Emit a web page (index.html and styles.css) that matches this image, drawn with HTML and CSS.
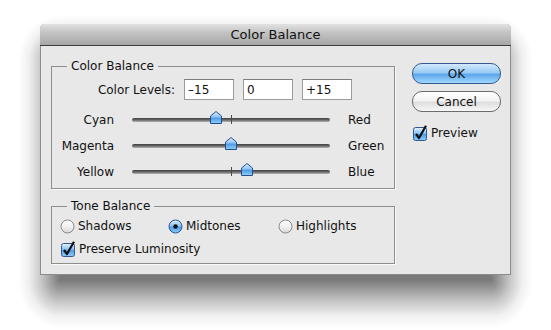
FILE: index.html
```html
<!DOCTYPE html>
<html lang="en">
<head>
    <meta charset="UTF-8">
    <title>Color Balance</title>
    <link rel="stylesheet" href="styles.css">
</head>
<body>
  <div class="desk">
    <div class="window">
        <div class="titlebar">Color Balance</div>
        <div class="content">
            <div class="left">
                <fieldset class="group balance">
                    <legend>Color Balance</legend>
                    <div class="levels">
                        <span class="levels-label">Color Levels:</span>
                        <input class="field" type="text" value="–15">
                        <input class="field" type="text" value="0">
                        <input class="field" type="text" value="+15">
                    </div>

                    <div class="slider-row">
                        <span class="from">Cyan</span>
                        <div class="track">
                            <span class="tick"></span>
                            <svg class="thumb" style="left: 78px" width="12" height="13" viewBox="0 0 12 13"><use href="#thumb-shape"/></svg>
                        </div>
                        <span class="to">Red</span>
                    </div>
                    <div class="slider-row">
                        <span class="from">Magenta</span>
                        <div class="track">
                            <span class="tick"></span>
                            <svg class="thumb" style="left: 93px" width="12" height="13" viewBox="0 0 12 13"><use href="#thumb-shape"/></svg>
                        </div>
                        <span class="to">Green</span>
                    </div>
                    <div class="slider-row">
                        <span class="from">Yellow</span>
                        <div class="track">
                            <span class="tick"></span>
                            <svg class="thumb" style="left: 109px" width="12" height="13" viewBox="0 0 12 13"><use href="#thumb-shape"/></svg>
                        </div>
                        <span class="to">Blue</span>
                    </div>
                </fieldset>

                <fieldset class="group tone">
                    <legend>Tone Balance</legend>
                    <div class="radios">
                        <label class="option"><svg width="15" height="15" viewBox="0 0 15 15"><use href="#radio-off"/></svg>Shadows</label>
                        <label class="option"><svg width="15" height="15" viewBox="0 0 15 15"><use href="#radio-on"/></svg>Midtones</label>
                        <label class="option"><svg width="15" height="15" viewBox="0 0 15 15"><use href="#radio-off"/></svg>Highlights</label>
                    </div>
                    <label class="option check-row"><svg width="16" height="16" viewBox="0 0 16 16"><use href="#check-on"/></svg>Preserve Luminosity</label>
                </fieldset>
            </div>

            <div class="right">
                <button class="btn btn-default">OK</button>
                <button class="btn">Cancel</button>
                <label class="option preview"><svg width="16" height="16" viewBox="0 0 16 16"><use href="#check-on"/></svg>Preview</label>
            </div>
        </div>
    </div>
  </div>

    <!-- shared control graphics -->
    <svg class="defs" width="0" height="0">
        <defs>
            <linearGradient id="blue" x1="0" y1="0" x2="0" y2="1">
                <stop offset="0" stop-color="#e4f2ff"/>
                <stop offset="0.45" stop-color="#8ec3f3"/>
                <stop offset="0.55" stop-color="#4f9be6"/>
                <stop offset="1" stop-color="#8fd0fb"/>
            </linearGradient>
            <linearGradient id="white" x1="0" y1="0" x2="0" y2="1">
                <stop offset="0" stop-color="#ffffff"/>
                <stop offset="0.5" stop-color="#f1f1f1"/>
                <stop offset="1" stop-color="#d6d6d6"/>
            </linearGradient>
            <g id="thumb-shape">
                <path d="M6 0.5 L11.5 5 L11.5 12.5 L0.5 12.5 L0.5 5 Z" fill="url(#blue)" stroke="#28508e" stroke-linejoin="round"/>
            </g>
            <g id="radio-off">
                <circle cx="7.5" cy="7.5" r="6.5" fill="url(#white)" stroke="#8a8a8a"/>
            </g>
            <g id="radio-on">
                <circle cx="7.5" cy="7.5" r="6.5" fill="url(#blue)" stroke="#2d5590"/>
                <circle cx="7.5" cy="7.5" r="2.2" fill="#111"/>
            </g>
            <g id="check-on">
                <rect x="1.5" y="2.5" width="13" height="13" rx="2" fill="url(#blue)" stroke="#34598f"/>
                <path d="M4 9 L7 13 L14 0.8" fill="none" stroke="#111" stroke-width="2.2" stroke-linejoin="round"/>
            </g>
        </defs>
    </svg>
</body>
</html>
```

FILE: styles.css
```css
body {
    margin: 0;
    background: #fff;
    font-family: "DejaVu Sans", Verdana, sans-serif;
    font-size: 12px;
    color: #111;
}

/* the window's soft drop shadow, built as a blurred rectangle in 9 pieces */
.desk {
    min-height: 330px;
    box-sizing: border-box;
    padding: 24px 0 0 40px;
    background-color: #fff;
    background-repeat: no-repeat;
    background-image:
        linear-gradient(rgba(0, 0, 0, 0.52), rgba(0, 0, 0, 0.52)),
        linear-gradient(to bottom, rgba(0, 0, 0, 0.52), rgba(0, 0, 0, 0.22) 45%, rgba(0, 0, 0, 0.06) 75%, rgba(0, 0, 0, 0)),
        linear-gradient(to top, rgba(0, 0, 0, 0.52), rgba(0, 0, 0, 0.22) 45%, rgba(0, 0, 0, 0.06) 75%, rgba(0, 0, 0, 0)),
        linear-gradient(to left, rgba(0, 0, 0, 0.52), rgba(0, 0, 0, 0.22) 45%, rgba(0, 0, 0, 0.06) 75%, rgba(0, 0, 0, 0)),
        linear-gradient(to right, rgba(0, 0, 0, 0.52), rgba(0, 0, 0, 0.22) 45%, rgba(0, 0, 0, 0.06) 75%, rgba(0, 0, 0, 0)),
        radial-gradient(farthest-side at right top, rgba(0, 0, 0, 0.52), rgba(0, 0, 0, 0.22) 45%, rgba(0, 0, 0, 0.06) 75%, rgba(0, 0, 0, 0)),
        radial-gradient(farthest-side at left top, rgba(0, 0, 0, 0.52), rgba(0, 0, 0, 0.22) 45%, rgba(0, 0, 0, 0.06) 75%, rgba(0, 0, 0, 0)),
        radial-gradient(farthest-side at right bottom, rgba(0, 0, 0, 0.52), rgba(0, 0, 0, 0.22) 45%, rgba(0, 0, 0, 0.06) 75%, rgba(0, 0, 0, 0)),
        radial-gradient(farthest-side at left bottom, rgba(0, 0, 0, 0.52), rgba(0, 0, 0, 0.22) 45%, rgba(0, 0, 0, 0.06) 75%, rgba(0, 0, 0, 0));
    background-size:
        431px 220px,
        431px 48px,
        431px 45px,
        42px 220px,
        42px 220px,
        42px 48px,
        42px 48px,
        42px 45px,
        42px 45px;
    background-position:
        60px 60px,
        60px 280px,
        60px 15px,
        18px 60px,
        491px 60px,
        18px 280px,
        491px 280px,
        18px 15px,
        491px 15px;
}

.window {
    width: 471px;
    box-sizing: border-box;
    background: #e8e8e8;
    border: 1px solid #8c8c8c;
    border-top: none;
    border-radius: 5px 5px 0 0;
}

.titlebar {
    height: 21px;
    line-height: 22px;
    margin: 0 -1px;
    text-align: center;
    font-size: 13px;
    background: linear-gradient(#e2e2e2, #c4c4c4 40%, #a7a7a7);
    border-bottom: 1px solid #3c3c3c;
    border-radius: 5px 5px 0 0;
}

.content {
    display: flex;
    align-items: flex-start;
}

.left {
    width: 344px;
    padding: 12px 0 10px 10px;
}

.right {
    display: flex;
    flex-direction: column;
    align-items: flex-start;
    width: 89px;
    padding: 17px 0 0 17px;
}

/* group boxes */

.group {
    margin: 0;
    padding: 0 0 3px;
    min-width: 0;
    width: 344px;
    box-sizing: border-box;
    border: 1px solid #8e8e8e;
    box-shadow: 1px 1px 0 #fbfbfb;
}

.group legend {
    margin-left: 15px;
    padding: 0 4px;
    line-height: 16px;
    font-size: 12px;
}

.tone {
    margin-top: 9px;
    padding-bottom: 6px;
}

.levels {
    display: flex;
    align-items: center;
    gap: 9px;
    margin-top: 5px;
    margin-bottom: 7px;
}

.levels-label {
    width: 123px;
    text-align: right;
}

.field {
    width: 50px;
    height: 21px;
    box-sizing: border-box;
    margin: 0;
    padding: 1px 3px 0;
    border: 1px solid #9b9b9b;
    border-top-color: #7d7d7d;
    background: #fff;
    font-family: inherit;
    font-size: 12px;
    color: #111;
}

.slider-row {
    display: grid;
    grid-template-columns: 62px 198px auto;
    column-gap: 18px;
    align-items: center;
    height: 26px;
}

.from {
    text-align: right;
}

.track {
    position: relative;
    height: 4px;
    border-radius: 2px;
    background: linear-gradient(#3f3f3f, #6a6a6a 50%, #b4b4b4);
}

.tick {
    position: absolute;
    left: 99px;
    top: -3px;
    width: 1px;
    height: 9px;
    background: #4a4a4a;
}

.thumb {
    position: absolute;
    top: -7px;
}

/* radios and checkboxes */

.option {
    display: flex;
    align-items: center;
    gap: 3px;
    height: 16px;
}

.radios {
    display: grid;
    grid-template-columns: 108px 110px auto;
    margin: 4px 0 0 8px;
}

.check-row {
    margin: 7px 0 0 8px;
}

.preview {
    margin-top: 13px;
}

/* buttons */

.btn {
    width: 89px;
    height: 21px;
    margin: 0;
    padding: 0;
    border: 1px solid #6b6b6b;
    border-radius: 10px;
    font-family: inherit;
    font-size: 12px;
    color: #111;
    background: linear-gradient(#ffffff, #f3f3f3 45%, #dedede 55%, #f7f7f7);
}

.btn + .btn {
    margin-top: 7px;
}

.btn-default {
    border-color: #35598f;
    background: linear-gradient(#d4eafd, #99cbf5 45%, #5ea7ec 55%, #9fd8fd);
}

.defs {
    position: absolute;
}
```
